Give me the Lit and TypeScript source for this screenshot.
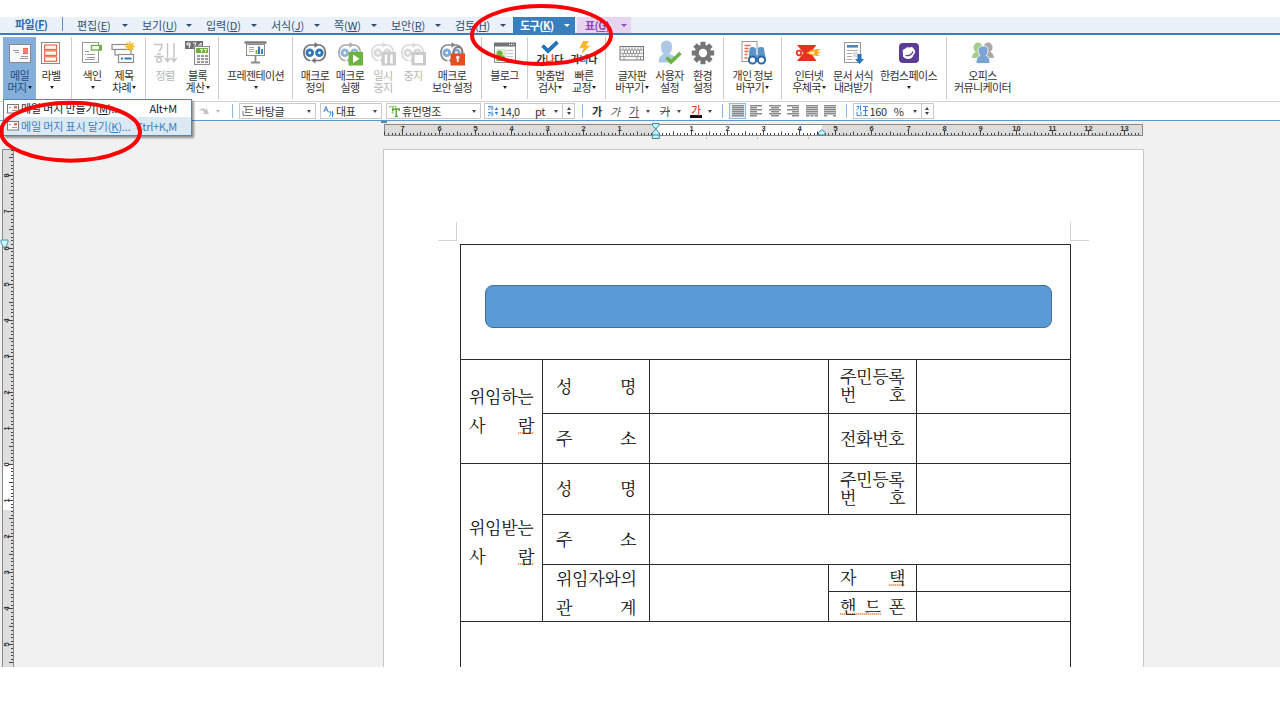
import { LitElement, html, svg, css, nothing } from "lit";
import { customElement } from "lit/decorators.js";

type Btn = { w: number; icon: string; a: string; b?: string; arrow?: boolean; off?: boolean; on?: boolean };
type Group = { w: number; pad: number; items: Btn[] };

const loop = (c: string, d: string) => svg`
  <path d="M8.500 19.500H7.500A6.300 7.800 0 0 1 7.500 4H17.500A6.300 7.800 0 0 1 18 19.500H12.500" fill="none" stroke=${c} stroke-width="1.700"/>
  <path d="M12.500 1L16.500 4L12.500 7zM13.500 16.500L9.500 19.500L13.500 22.500z" fill=${c}/>
  <circle cx="7.800" cy="11.800" r="2.800" fill="#fff" stroke=${d} stroke-width="2.900"/>
  <circle cx="17.400" cy="11.800" r="2.800" fill="#fff" stroke=${d} stroke-width="2.900"/>`;

const teeth = [0, 45, 90, 135, 180, 225, 270, 315];

const icons: Record<string, unknown> = {
  mail: svg`<rect x="2.500" y="3.500" width="21" height="18" fill="#fbfbfb" stroke="#84888c"/>
    <path d="M6 9.500h6M8 11.500h4M14 15.500h7M13 17.500h8" stroke="#999"/><rect x="16" y="7" width="5" height="6" fill="#f0645c"/>
    <path d="M16 9h5M16 11h5" stroke="#fbb" stroke-width=".6"/>`,
  label: svg`<rect x="3.500" y="1.500" width="18" height="21" fill="#fff" stroke="#8a8a8a"/>
    <g fill="#fff5f0" stroke="#ea6a4a" stroke-width="1.200"><rect x="6.600" y="4" width="12" height="4.500"/><rect x="6.600" y="9.900" width="12" height="4.500"/><rect x="6.600" y="15.800" width="12" height="4.500"/></g>`,
  index: svg`<rect x="3.500" y="1.500" width="16" height="20" fill="#fff" stroke="#999"/>
    <path d="M6 10.500h4M8 13.500h8M8 16.500h8M6 13.500h1M6 18.500h10" stroke="#999"/>
    <rect x="12.500" y="4.500" width="9.500" height="4.500" fill="#fff" stroke="#6fb04a" stroke-width="1.400"/><rect x="20" y="4" width="3" height="5.500" fill="#6fb04a"/>`,
  chapter: svg`<g fill="#fff" stroke="#8e8e8e" stroke-width="1.200"><rect x="1" y="3.500" width="16" height="5"/><rect x="4" y="8.500" width="16" height="5.500"/><rect x="7.500" y="13.500" width="15" height="8"/></g>
    <path d="M10 17.500h2M13.500 17.500h7" stroke="#2f78bd" stroke-width="1.800"/>
    <g stroke="#f3b928" stroke-width="1.400"><path d="M19 .5v10M14 5.500h10M15.500 2l7 7M22.500 2l-7 7"/></g><circle cx="19" cy="5.500" r="3" fill="#f8c32c"/>`,
  sort: svg`<g fill="none" stroke="#c6c6c6" stroke-width="1.400"><path d="M2 3.500h8q0 4-3 7"/><path d="M5 13h4M2 15.500h10"/><circle cx="7" cy="19" r="2.300"/>
    <path d="M15.500 2v18M12.800 17l2.700 3.500 2.700-3.500M22 2v18M19.300 17l2.700 3.500 2.700-3.500"/></g>`,
  calc: svg`<rect x="0" y="0" width="18" height="8" fill="#6f6f6f"/><path d="M2 2h3v2h-3zM5 4l-1 3M8 2h3l-2 5M16 7V2l-3 3.500h4" stroke="#fff" fill="none"/>
    <rect x="9.500" y="5.500" width="15" height="18" fill="#f6f6f6" stroke="#8c8c8c"/><rect x="11" y="7" width="12" height="5" fill="#6fae3d"/><path d="M15 8.500h2.500l-1.500 3M19 8.500h2.500l-1.500 3" stroke="#fff" fill="none"/>
    <path d="M12 15h3M16 15h3M20 15h3M12 18h3M16 18h3M20 18h3M12 21h3M16 21h3M20 21h3" stroke="#999" stroke-width="1.800"/>`,
  board: svg`<path d="M1.500 1.500h22" stroke="#777" stroke-width="2.400"/><rect x="3.500" y="3.500" width="18" height="11" fill="#fff" stroke="#8a8a8a"/>
    <path d="M12.500 15v6M8 21.500h9" stroke="#8a8a8a" stroke-width="1.800"/><path d="M6 6.500h5M6 8.500h5M6 10.500h5" stroke="#aaa"/>
    <path d="M13.500 13V9" stroke="#6fae3d" stroke-width="1.800"/><path d="M16 13V5.500" stroke="#2f78bd" stroke-width="2"/><path d="M19 13V8" stroke="#2f78bd" stroke-width="1.800"/>`,
  macro: loop("#6f7274", "#2f78bd"),
  run: svg`${loop("#a9abad", "#8db4dc")}<rect x="11.500" y="11" width="14.500" height="13.500" fill="#6db33f"/><path d="M16 13.500v8.500l6.500-4.200z" fill="#fff"/>`,
  pause: svg`${loop("#dadada", "#dadada")}<rect x="11.500" y="11" width="14.500" height="13.500" fill="#cbcbcb"/><path d="M16 13.500v9M21.500 13.500v9" stroke="#fff" stroke-width="2.400"/>`,
  stop: svg`${loop("#dadada", "#dadada")}<rect x="11.500" y="11" width="14.500" height="13.500" fill="#cbcbcb"/><rect x="14.500" y="14" width="8.500" height="8" fill="#fff"/>`,
  lock: svg`${loop("#85888a", "#7fa9d6")}<path d="M14.500 13v-2.500a4.500 4.500 0 0 1 9 0V13" fill="none" stroke="#7e7e7e" stroke-width="1.800"/><rect x="11.500" y="12.500" width="14.500" height="12" fill="#e2501f"/>
    <circle cx="18.700" cy="16.500" r="1.700" fill="#fff"/><path d="M18.700 17v4" stroke="#fff" stroke-width="1.600"/>`,
  blog: svg`<rect x="2.500" y="2.500" width="21" height="19" fill="#fafafa" stroke="#8c8c8c"/><rect x="2" y="1.500" width="22" height="4" fill="#747474"/><path d="M17 3.500h1M19 3.500h1M21 3.500h1" stroke="#fff"/>
    <rect x="4.500" y="8" width="10" height="12" fill="#dbe9cf"/><circle cx="7.500" cy="12.500" r="3" fill="#6db33f"/><path d="M4.500 20v-3l3-2.500h4l5 5.500z" fill="#6db33f"/><path d="M15 9.500h6M15 12.500h6M15 15.500h6M15 18.500h6" stroke="#c4c4c4"/>`,
  spell: svg`<path d="M5.500 4.500l5.500 5.500L20.500 1" fill="none" stroke="#2773b9" stroke-width="3.800"/>
    <text x="-.5" y="21.500" font-size="10" font-weight="700" fill="#333" textLength="27">가<tspan fill="#e2501f">나</tspan>다</text>`,
  quick: svg`<path d="M12 0h6l-3 4.500h4.500L10.500 13l2-6h-4z" fill="#f8b92a"/>
    <text x="-.5" y="21.500" font-size="10" font-weight="700" fill="#333" textLength="27">가<tspan fill="#2773b9">나</tspan>다</text>`,
  keyboard: svg`<rect x="1" y="5.500" width="23.500" height="13.500" fill="#fff" stroke="#777"/><path d="M1 9h23M1 12.300h23M1 15.600h23M4 5.500v3.500M7 5.500v3.500M10 5.500v3.500M13 5.500v3.500M16 5.500v3.500M19 5.500v3.500M22 5.500v3.500M5.500 9v3.300M8.500 9v3.300M11.500 9v3.300M14.500 9v3.300M17.500 9v3.300M20.500 9v3.300M4 12.300v3.300M7 12.300v3.300M10 12.300v3.300M13 12.300v3.300M16 12.300v3.300M19 12.300v3.300M5 15.600v3.400M18 15.600v3.400M21.500 15.600v3.400" stroke="#8a8a8a" stroke-width=".9"/>`,
  user: svg`<path d="M9.500-.5q5.500 0 5.500 6t-3 7.500q4 1 6 2.500L14 21.500H1.500q0-7 5.500-8.500Q4 11.500 4 5.500T9.500-.5" fill="#abc8e6"/><path d="M9.500 16.500l4.500 4.500L23.500 12" fill="none" stroke="#6db33f" stroke-width="3.600"/>`,
  gear: svg`<g fill="#757575">${teeth.map((a) => svg`<rect x="10.500" y=".8" width="5" height="5" transform="rotate(${a} 13 12)"/>`)}</g><circle cx="13" cy="12" r="6.200" fill="#fff" stroke="#757575" stroke-width="4"/>`,
  privacy: svg`<rect x="2" y=".5" width="15" height="20" fill="#fff" stroke="#999"/><path d="M4.500 4.500h6M4.500 7.500h4M4.500 10.500h4M4.500 13.500h3M4.500 17h3" stroke="#e9694a" stroke-width="1.400"/>
    <path d="M9.500 8q0-2 3-2t3.500 2h1.500q0-2 3.500-2t3 2L26 19H8.500z" fill="#5e93c6"/><path d="M16 8h2v6h-2z" fill="#c5daee"/>
    <circle cx="12.500" cy="19" r="3.600" fill="#fff" stroke="#2a69a8" stroke-width="2"/><circle cx="21.500" cy="19" r="3.600" fill="#fff" stroke="#2a69a8" stroke-width="2"/>`,
  post: svg`<path d="M1 4H20.500L14.500 11.500L20.500 20H1L7.500 12z" fill="#e8301f"/><circle cx="3" cy="12" r="2.300" fill="#fff" stroke="#e8301f" stroke-width="1.800"/>
    <path d="M10 12l6-3.500 9-.5-4 2.500 4 1-4 1.300 3 2.200-7-.5z" fill="#f9a11f"/><path d="M12.500 11.500l7-1.500-1.500 2 1 1.500-5-.5z" fill="#fff0b0"/>`,
  form: svg`<rect x="4.500" y="1.500" width="16" height="20" fill="#fff" stroke="#999"/><rect x="7" y="4" width="11" height="2.600" fill="#4a85c0"/><path d="M7 9.500h11M7 12.500h5M7 15.500h5M7 18.500h5" stroke="#aaa"/><rect x="13" y="11" width="5" height="5" fill="#ddd"/>
    <path d="M17.500 13h4v5h2.500l-4.500 5-4.500-5h2.500z" fill="#2773b9"/>`,
  space: svg`<rect x="3" y="2" width="20" height="20" rx="4" fill="#5b3b96"/><path d="M7 12.500q-1.500-4 2.500-5 1-2 4-1 3-1.500 4.500 1.500 2.500 3-.5 6-1.500 4.500-6 4-5.500-1-4.500-5.500" fill="#fff"/><path d="M9.500 14.500q5.500 1 7.500-4" stroke="#5b3b96" fill="none" stroke-width="1.200"/>`,
  people: svg`<g fill="#a4cc8c"><ellipse cx="8" cy="6.500" rx="4.500" ry="5"/><path d="M2 17q0-6 6-6.500t4 6.500z"/></g><g fill="#a9a9a9"><ellipse cx="18" cy="6.500" rx="4.500" ry="5"/><path d="M13 17q0-6 5-6.500t6 6.500z"/></g>
    <g fill="#7aa5d2" stroke="#fff" stroke-width=".8"><path d="M6 22.500q0-7 4-8Q8 12.500 8 9t5-4 5 4-2 5.500q4 1 4 8z"/></g>`,
};

const groups: Group[] = [
  { w: 68, pad: 0, items: [{ w: 33, icon: "mail", a: "메일", b: "머지", arrow: true, on: true }, { w: 30, icon: "label", a: "라벨", arrow: true }] },
  { w: 73, pad: 4, items: [{ w: 32, icon: "index", a: "색인", arrow: true }, { w: 32, icon: "chapter", a: "제목", b: "차례", arrow: true }] },
  { w: 72, pad: 3, items: [{ w: 32, icon: "sort", a: "정렬", off: true }, { w: 33, icon: "calc", a: "블록", b: "계산", arrow: true }] },
  { w: 73, pad: 0, items: [{ w: 73, icon: "board", a: "프레젠테이션", arrow: true }] },
  { w: 188, pad: 4, items: [
    { w: 36, icon: "macro", a: "매크로", b: "정의" }, { w: 34, icon: "run", a: "매크로", b: "실행" },
    { w: 32, icon: "pause", a: "일시", b: "중지", off: true }, { w: 28, icon: "stop", a: "중지", off: true },
    { w: 50, icon: "lock", a: "매크로", b: "보안 설정" }] },
  { w: 45, pad: 0, items: [{ w: 45, icon: "blog", a: "블로그", arrow: true }] },
  { w: 77, pad: 5, items: [{ w: 34, icon: "spell", a: "맞춤법", b: "검사", arrow: true }, { w: 34, icon: "quick", a: "빠른", b: "교정", arrow: true }] },
  { w: 117, pad: 7, items: [{ w: 38, icon: "keyboard", a: "글자판", b: "바꾸기", arrow: true }, { w: 37, icon: "user", a: "사용자", b: "설정" }, { w: 29, icon: "gear", a: "환경", b: "설정" }] },
  { w: 57, pad: 0, items: [{ w: 57, icon: "privacy", a: "개인 정보", b: "바꾸기", arrow: true }] },
  { w: 164, pad: 7, items: [{ w: 40, icon: "post", a: "인터넷", b: "우체국", arrow: true }, { w: 48, icon: "form", a: "문서 서식", b: "내려받기" }, { w: 63, icon: "space", a: "한컴스페이스", arrow: true }] },
  { w: 80, pad: 5, items: [{ w: 61, icon: "people", a: "오피스", b: "커뮤니케이터" }] },
];

const menus = [
  ["편집", "E", 65], ["보기", "U", 64], ["입력", "D", 65], ["서식", "J", 63],
  ["쪽", "W", 57], ["보안", "R", 64], ["검토", "H", 58],
] as const;

@customElement("hwp-ribbon")
export class HwpRibbon extends LitElement {
  static styles = css`
    :host { display: block; font: 11px/11px "Noto Sans CJK KR", sans-serif; color: #333; }
    .bar { display: flex; height: 66px; padding-left: 3px; background: #fff; }
    .group { display: flex; box-sizing: content-box; }
    .sep { width: 1px; height: 62px; margin-top: 2px; background: #ccc; flex: none; }
    .btn { display: flex; flex-direction: column; align-items: center; flex: none; height: 64px; margin-top: 2px; padding-top: 4px; box-sizing: border-box; }
    .btn.on { background: #84afd9; color: #1f4e80; }
    .btn.off { color: #b5b5b5; }
    svg { display: block; flex: none; overflow: visible; }
    .a { margin-top: 4px; height: 12px; line-height: 12px; white-space: nowrap; letter-spacing: -0.6px; }
    .b { height: 12px; line-height: 12px; display: flex; align-items: center; white-space: nowrap; letter-spacing: -0.6px; }
    .tri { width: 0; height: 0; border: 2.5px solid transparent; border-top: 3px solid #222; border-bottom: 0; margin-left: 1px; }
  `;
  render() {
    return html`<div class="bar">${groups.map((g, i) => html`
      <div class="group" style="width:${g.w - g.pad}px;padding-left:${g.pad}px">${g.items.map((b) => html`
        <div class="btn ${b.on ? "on" : ""} ${b.off ? "off" : ""}" style="width:${b.w}px">
          <svg width="26" height="24" viewBox="0 0 26 24">${icons[b.icon]}</svg>
          <div class="a">${b.a}</div>
          <div class="b">${b.b ?? ""}${b.arrow ? html`<i class="tri"></i>` : nothing}</div>
        </div>`)}</div>${i < groups.length - 1 ? html`<div class="sep"></div>` : nothing}`)}</div>`;
  }
}

/* x offset and width of the odd (short) lines, per alignment mode */
const shortLine = [[0, 12], [0, 7], [2, 8], [5, 7], [0, 12], [0, 12]];

const para = (kind: number) => html`<svg width="12" height="12">${[0, 1, 2, 3, 4, 5].map((i) => {
  const [x, w] = i % 2 ? shortLine[kind] : [0, 12];
  return svg`<rect x=${x} y=${i * 2} width=${w} height="1.500" fill="#8b8b8b"/>`;
})}${kind === 4 ? svg`<path d="M4 10v2M8 10v2" stroke="#fff"/>` : nothing}${kind === 5 ? svg`<path d="M3 11h6" stroke="#fff" stroke-width="2"/>` : nothing}</svg>`;

@customElement("hwp-format-bar")
export class HwpFormatBar extends LitElement {
  static styles = css`
    :host { display: block; font: 11px/14px "Noto Sans CJK KR", sans-serif; color: #333; }
    .bar { display: flex; align-items: center; height: 18px; padding-left: 197px; background: #fff; border-top: 1px solid #d2d2d2; border-bottom: 1px solid #5b9bd5; }
    .box { display: flex; align-items: center; height: 16px; box-sizing: border-box; border: 1px solid #c9c9c9; padding: 0 4px 0 2px; background: #fff; white-space: nowrap; letter-spacing: -0.4px; flex: none; }
    .style { width: 77px; margin-left: 6px; }
    .lang { width: 62px; margin-left: 4px; }
    .font { width: 95px; margin-left: 4px; }
    .size { width: 79px; margin-left: 3px; }
    .line { width: 69px; margin-left: 6px; }
    .box svg { margin-right: 2px; flex: none; }
    .grow { flex: 1; }
    .unit { margin-right: 9px; }
    .spin { width: 13px; height: 16px; box-sizing: border-box; margin-left: -1px; border: 1px solid #c9c9c9; display: flex; flex-direction: column; align-items: center; justify-content: space-evenly; flex: none; }
    .tri { width: 0; height: 0; border: 2.5px solid transparent; border-top: 3px solid #444; border-bottom: 0; flex: none; }
    .up { transform: rotate(180deg); }
    .pale { border-top-color: #bbb; margin: 0 12px 0 6px; }
    .sep { width: 1px; height: 14px; background: #8dbbe3; flex: none; }
    .g { width: 12px; text-align: center; flex: none; }
    .bold { font-weight: 700; margin-left: 8px; }
    .ital { font-style: italic; margin-left: 6px; color: #555; }
    .under { text-decoration: underline; margin: 0 6px 0 7px; color: #555; }
    .strike { text-decoration: line-through; margin: 0 6px 0 9px; color: #555; }
    .red { color: #e2501f; font-weight: 500; line-height: 10px; height: 10px; border-bottom: 3px solid #111; margin: 0 6px 0 9px; }
    .gap { margin-right: 10px; }
    .al { display: flex; margin-left: 6px; align-items: center; }
    .al span { width: 16px; height: 14px; display: flex; align-items: center; justify-content: center; margin-right: 2.500px; border: 1px solid transparent; box-sizing: border-box; }
    .al .sel { border-color: #8dbbe3; background: #e4eff9; height: 16px; width: 17px; margin-right: 2px; }
  `;
  render() {
    const tri = html`<i class="tri"></i>`;
    const spin = html`<div class="spin"><i class="tri up"></i>${tri}</div>`;
    return html`<div class="bar">
      <svg width="13" height="10"><path d="M1 5q5-5 8-1V1l3 7H5l2.500-1.500Q5 3 1 5" fill="#c6c6c6"/></svg><i class="tri pale"></i><div class="sep"></div>
      <div class="box style"><svg width="11" height="12"><path d="M1 1.500h10M4 4.500h7M3 7.500h6M1 10.500h10M4 1v6M1 6v4" stroke="#777"/></svg>바탕글<i class="grow"></i>${tri}</div>
      <div class="box lang"><svg width="11" height="12"><path d="M.8 7L3 1.500 5.200 7M1.600 5h3" fill="none" stroke="#3f87cc"/><path d="M5.500 7H8q0 3-2 4.500M9.500 6v6M9.500 9h1.500" fill="none" stroke="#3f87cc"/></svg>대표<i class="grow"></i>${tri}</div>
      <div class="box font"><svg width="11" height="12"><path d="M.5 3V1.500H7V3M3.700 1.500V8M2.500 8h2.500" fill="none" stroke="#8fc46a"/><path d="M4 6V4h6.500v2M7.300 4v7.500M6 11.500h3" fill="none" stroke="#5ba12f" stroke-width="1.400"/></svg>휴먼명조<i class="grow"></i>${tri}</div>
      <div class="box size"><svg width="11" height="12"><path d="M1 1.500h2.500q0 2-2.500 3.500M5 .5v5M5 3h1.500M1 7.500h2.500q0 2-2.500 3.500M5 6.500v5M5 9h1.500" fill="none" stroke="#3f87cc"/><path d="M7.500 5L9.500 2l2 3zM7.500 7L9.500 10l2-3z" fill="#3f87cc"/></svg>14,0<i class="grow"></i><span class="unit">pt</span>${tri}</div>${spin}
      <div class="sep" style="margin-left:7px"></div>
      <span class="g bold">가</span><span class="g ital">가</span><span class="g under">가</span>${tri}
      <span class="g strike">가</span>${tri}<span class="g red">가</span><i class="tri gap"></i>
      <div class="sep"></div>
      <div class="al">${[0, 1, 2, 3, 4, 5].map((k) => html`<span class=${k === 0 ? "sel" : ""}>${para(k)}</span>`)}</div>
      <div class="sep" style="margin-left:5px"></div>
      <div class="box line"><svg width="12" height="12"><path d="M.5 1.500H3q0 2-2.500 3.500M4.500 .5v5M1 7v3.500h3M5 6.500v5M7 1.500h5M7 5.500h5M7 10.500h5M9.500 1.500v9" fill="none" stroke="#3f87cc"/></svg>160<i class="grow"></i><span class="unit">%</span>${tri}</div>${spin}
    </div>`;
  }
}

const UNIT = 36.08;

@customElement("hwp-ruler")
export class HwpRuler extends LitElement {
  static properties = { vertical: { type: Boolean } };
  declare vertical: boolean;
  static styles = css`
    :host { display: block; }
    svg { display: block; overflow: visible; }
    text { font: 700 7.500px "Liberation Sans", sans-serif; fill: #333; text-anchor: middle; }
  `;
  ticks(zero: number, len: number) {
    const out: { p: number; n: number }[] = [];
    for (let n = Math.ceil((-zero / UNIT) * 10); zero + (n * UNIT) / 10 < len; n++) out.push({ p: Math.round(zero + (n * UNIT) / 10 - 0.5) + 0.5, n });
    return out;
  }
  render() {
    if (this.vertical) {
      return html`<svg width="13" height="517"><rect x="0" y="0" width="12" height="530" fill="#dedede"/><rect x="0" y="315" width="11" height="46" fill="#fff"/>
        <path d="M.5 530V.5H11.500V530" fill="none" stroke="#888"/>
        ${this.ticks(315.5, 517).map(({ p, n }) => svg`<path d="M${n % 10 === 0 ? 6 : n % 5 === 0 ? 7 : 9} ${p}H11" stroke="#444"/>
          ${n % 10 === 0 ? svg`<text transform="translate(6.500 ${p}) rotate(-90)">${Math.abs(n / 10)}</text>` : nothing}`)}
        <path d="M-1 91h7v2l-2 5h-3l-2-5z" fill="#d4f3fa" stroke="#3b9cb5"/></svg>`;
    }
    return html`<svg width="760" height="16"><rect width="759" height="11" fill="#dcdcdc"/><rect x="271" width="167" height="11" fill="#fff"/>
      <rect x=".5" y=".5" width="758" height="11" fill="none" stroke="#888"/>
      ${this.ticks(271.5, 758).map(({ p, n }) => svg`<path d="M${p} ${n % 10 === 0 ? 6 : n % 5 === 0 ? 7.5 : 9}V11" stroke="#444"/>
        ${n % 10 === 0 && n !== 0 ? svg`<text x=${p} y="7">${Math.abs(n / 10)}</text>` : nothing}`)}
      <rect x="-3" y="-3" width="6" height="2" fill="#4b93ab"/>
      <g fill="#c9f1f9" stroke="#2f8ca5"><path d="M268.500-.5h6.500v2l-3.200 3.500-3.300-3.500z"/><path d="M271.800 5l3.500 4v5.500h-7V9zM268.500 11h6.500"/><path d="M438 5.500l3 3v2.500h-6.500V8.500z"/></g>
      <path d="M322.500 13v2M373.500 13v2M424.500 13v2" stroke="#bbb"/></svg>`;
  }
}

@customElement("hwp-form")
export class HwpForm extends LitElement {
  static styles = css`
    :host { display: block; font: 17px/29px "Noto Serif CJK KR", "Noto Sans CJK KR", serif; color: #111; letter-spacing: -0.3px; }
    .grid { display: grid; width: 609px; padding: 1px 1px 0; gap: 1px; background: #2a2a2a;
      grid-template-columns: 81px 106px 178px 87px 153px;
      grid-template-rows: 114px 53px 49px 50px 49px 26px 29px 45px; }
    .c { background: #fff; display: flex; flex-direction: column; justify-content: center; align-items: center; overflow: hidden; padding-bottom: 3px; }
    .all { grid-column: 1 / -1; }
    .r2 { grid-row: span 2; }
    .r4 { grid-row: span 4; }
    .c3 { grid-column: span 3; }
    .title { width: 565px; height: 41px; border: 1px solid #41719c; border-radius: 8px; background: #5b9bd5; margin: 11px 0 0 6px; }
    .t { width: 65px; text-align: justify; text-align-last: justify; white-space: nowrap; }
    .wide { width: 80px; }
    .tight { line-height: 18px; }
    .miss { background: repeating-linear-gradient(90deg, #f2a36b 0 1px, #fbdcc6 1px 2px) 0 88% / 100% 2px no-repeat; }
  `;
  render() {
    const l = (s: unknown, k = "") => html`<div class="t ${k}">${s}</div>`;
    const ram = html`사 <span class="miss">람</span>`;
    const c = (k: string, ...x: unknown[]) => html`<div class="c ${k}">${x}</div>`;
    return html`<div class="grid">
      ${c("all", html`<div class="title"></div>`)}
      ${c("r2", l("위임하는"), l(ram))}${c("", l("성 명", "wide"))}${c("")}${c("", l("주민등록", "tight"), l("번 호", "tight"))}${c("")}
      ${c("", l("주 소", "wide"))}${c("")}${c("", l("전화번호"))}${c("")}
      ${c("r4", l("위임받는"), l(ram))}${c("", l("성 명", "wide"))}${c("")}${c("", l("주민등록", "tight"), l("번 호", "tight"))}${c("")}
      ${c("", l("주 소", "wide"))}${c("c3")}
      ${c("r2", l("위임자와의", "wide"), l("관 계", "wide"))}${c("r2")}${c("", l(html`자 <span class="miss">택</span>`))}${c("")}
      ${c("", l(html`<span class="miss">핸 드</span> 폰`))}${c("")}
      ${c("all")}
    </div>`;
  }
}

@customElement("app-root")
export class AppRoot extends LitElement {
  static styles = css`
    :host { display: block; position: relative; width: 1280px; height: 720px; overflow: hidden; background: #fff; font: 11px/16px "Noto Sans CJK KR", sans-serif; color: #2d4f74; }
    .menu { display: flex; margin-top: 17px; height: 16px; line-height: 14px; background: #eaf1f8; border-bottom: 2px solid #3a7fbd; white-space: nowrap; }
    .file { width: 62px; padding-left: 15px; box-sizing: border-box; font-weight: 700; color: #2a6cb0; letter-spacing: -0.5px; }
    .bar { width: 1px; height: 14px; background: #5b90c4; margin: 0 14px 0 0; }
    .m { display: flex; align-items: center; justify-content: space-between; box-sizing: border-box; padding-right: 14px; letter-spacing: -0.1px; }
    .m.last { padding-right: 7px; }
    .tri { width: 0; height: 0; border: 3px solid transparent; border-top: 3.500px solid currentColor; border-bottom: 0; }
    .tab { display: flex; align-items: center; justify-content: space-between; box-sizing: border-box; }
    .active { width: 62px; background: #3a7fbd; color: #fff; font-weight: 700; padding: 0 5px 0 7px; letter-spacing: -0.5px; }
    .table { width: 54px; background: #e6d5f0; color: #9348b8; font-weight: 700; margin-left: 2px; padding: 0 4px 0 8px; letter-spacing: -0.5px; }
    .work { display: flex; height: 546px; background: #f1f1f1; overflow: hidden; }
    .side { width: 383px; flex: none; box-sizing: border-box; padding: 28px 0 0 2px; }
    .main { padding-top: 3px; }
    .hr { margin-left: 1px; height: 25px; }
    .page { width: 759px; height: 518px; background: #fff; border: 1px solid #c8c8c8; border-bottom: 0; }
    .corners { display: flex; justify-content: space-between; width: 651px; height: 19px; margin: 72px 0 0 54px; }
    .corner { width: 18px; height: 18px; border-bottom: 1px solid #d4d4d4; }
    .cl { border-right: 1px solid #d4d4d4; }
    .cr { border-left: 1px solid #d4d4d4; }
    .doc { margin: 3px 0 0 76px; }
    .drop { position: absolute; left: 3px; top: 99px; width: 187px; height: 35px; border: 1px solid #4d89c0; background: #fff; box-shadow: 2px 2px 2px rgba(0,0,0,.4); color: #222; line-height: 17px; }
    .row { display: flex; align-items: center; height: 17px; padding: 0 14px 0 3px; letter-spacing: -0.15px; white-space: nowrap; }
    .hot { background: #dce8f4; color: #3c7fc0; height: 18px; }
    .row svg { margin-right: 2px; flex: none; }
    .row span { flex: 1; }
    .row b { font-weight: 400; letter-spacing: -0.3px; }
    .marks { position: absolute; left: 0; top: 0; pointer-events: none; }
  `;
  render() {
    const env = html`<svg width="12" height="10"><rect x=".5" y=".5" width="11" height="8.500" fill="#fff" stroke="#777"/><rect x="7" y="2" width="3" height="2.500" fill="#e66"/><path d="M2 3.500h2M5 6.500h5" stroke="#999"/></svg>`;
    return html`
      <div class="menu">
        <div class="file">파일(<u>F</u>)</div><div class="bar"></div>
        ${menus.map(([n, k, w], i) => html`<div class="m ${i === menus.length - 1 ? "last" : ""}" style="width:${w}px"><span>${n}(<u>${k}</u>)</span><i class="tri"></i></div>`)}
        <div class="tab active"><span>도구(<u>K</u>)</span><i class="tri"></i></div>
        <div class="tab table"><span>표(<u>G</u>)</span><i class="tri"></i></div>
      </div>
      <hwp-ribbon></hwp-ribbon>
      <hwp-format-bar></hwp-format-bar>
      <div class="work">
        <div class="side"><hwp-ruler vertical></hwp-ruler></div>
        <div class="main">
          <div class="hr"><hwp-ruler></hwp-ruler></div>
          <div class="page">
            <div class="corners"><div class="corner cl"></div><div class="corner cr"></div></div>
            <div class="doc"><hwp-form></hwp-form></div>
          </div>
        </div>
      </div>
      <div class="drop">
        <div class="row">${env}<span>메일 머지 만들기(<u>M</u>)...</span><b>Alt+M</b></div>
        <div class="row hot">${env}<span>메일 머지 표시 달기(<u>K</u>)...</span><b>Ctrl+K,M</b></div>
      </div>
      <svg class="marks" width="1280" height="720" fill="none" stroke="#f00" stroke-width="4">
        <ellipse cx="541.500" cy="35" rx="69.500" ry="29"/><ellipse cx="70.500" cy="131.700" rx="69.500" ry="29"/>
      </svg>`;
  }
}
